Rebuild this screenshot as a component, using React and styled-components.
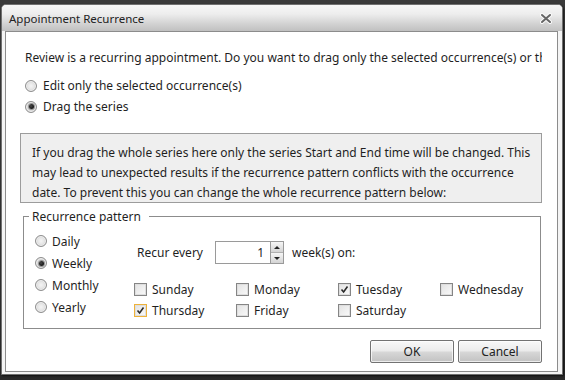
import styled, { createGlobalStyle } from "styled-components";

const GlobalStyle = createGlobalStyle`
  html, body {
    margin: 0;
    padding: 0;
  }
  body {
    width: 565px;
    height: 380px;
    overflow: hidden;
    background: #2c2c2c;
    font-family: "Noto Sans", "Open Sans", sans-serif;
    color: #1f1f1f;
  }
`;

const Backdrop = styled.div`
  width: 565px;
  height: 380px;
  box-sizing: border-box;
  padding: 4px 0 0 1px;
  background: linear-gradient(#3a3a3a, #2a2a2a);
`;

const Window = styled.div`
  width: 562px;
  height: 371px;
  box-sizing: border-box;
  border: 1px solid #707070;
  border-radius: 5px 5px 0 0;
  background: #f4f4f4;
  display: flex;
  flex-direction: column;
  box-shadow: 1px 1px 2px rgba(0, 0, 0, 0.6);
`;

const TitleBar = styled.div`
  height: 26px;
  flex-shrink: 0;
  display: flex;
  align-items: center;
  justify-content: space-between;
  padding: 0 10px 0 7px;
  border-radius: 4px 4px 0 0;
  background: linear-gradient(#f7f7f7 0%, #ededed 35%, #d4d4d4 70%, #c0c0c0 100%);
`;

const Title = styled.div`
  font-size: 11.5px;
  color: #222;
`;

const Content = styled.div`
  flex: 1;
  margin: 0 4px 2px 3px;
  border: 1px solid #8c8c8c;
  background: #fff;
  padding: 18px 15px 0 14px;
  overflow: hidden;
  font-size: 12px;
`;

const Prompt = styled.div`
  padding-left: 5px;
  line-height: 15px;
  white-space: nowrap;
  overflow: hidden;
`;

const Options = styled.div`
  margin-top: 10px;
  padding-left: 5px;
`;

const OptionRow = styled.div`
  height: ${(p) => p.$h || 21}px;
  display: flex;
  align-items: center;
  gap: ${(p) => p.$gap || 6}px;
  white-space: nowrap;
`;

const Radio = styled.span`
  position: relative;
  width: 12px;
  height: 12px;
  flex-shrink: 0;
  box-sizing: border-box;
  border-radius: 50%;
  border: 1px solid #8e8e8e;
  background: radial-gradient(circle at 50% 50%, #f4f4f4 0%, #e6e6e6 45%, #b9b9b9 100%);
  box-shadow: inset 0 0 0 1px #f0f0f0;

  &::after {
    content: "";
    position: absolute;
    left: 2.5px;
    top: 2.5px;
    width: 5px;
    height: 5px;
    border-radius: 50%;
    background: radial-gradient(circle at 40% 40%, #4a4a4a 0%, #0e0e0e 75%);
    box-shadow: 0 0 1px 1px #8a8a8a;
    display: ${(p) => (p.$checked ? "block" : "none")};
  }
`;

const InfoBox = styled.div`
  margin-top: 16px;
  height: 70px;
  box-sizing: border-box;
  border: 1px solid #9c9c9c;
  background: #efefef;
  padding: 9px 11px 0;
  line-height: 20px;
  white-space: nowrap;
`;

const Fieldset = styled.fieldset`
  margin: 6px 1px 0 3px;
  padding: 6px 0 7px 5px;
  border: 1px solid #8c8c8c;
  min-width: 0;
`;

const Legend = styled.legend`
  padding: 0 8px 0 3px;
  line-height: 15px;
`;

const PatternBody = styled.div`
  display: flex;
  padding-left: 6px;
`;

const Frequencies = styled.div`
  width: 99px;
  flex-shrink: 0;
`;

const WeeklyPanel = styled.div`
  display: flex;
  flex-direction: column;
`;

const RecurRow = styled.div`
  margin-top: 11px;
  padding-left: 3px;
  display: flex;
  align-items: center;
  height: 23px;
`;

const RecurLabel = styled.span`
  width: 78px;
`;

const Spinner = styled.div`
  display: flex;
  height: 23px;
`;

const SpinInput = styled.div`
  width: 55px;
  box-sizing: border-box;
  border: 1px solid #9a9a9a;
  border-right: none;
  text-align: right;
  padding-right: 6px;
  line-height: 21px;
  background: #fff;
`;

const SpinButtons = styled.div`
  width: 14px;
  box-sizing: border-box;
  border: 1px solid #9a9a9a;
  display: flex;
  flex-direction: column;
`;

const SpinButton = styled.div`
  flex: 1;
  display: flex;
  align-items: center;
  justify-content: center;
  background: linear-gradient(#f6f6f6, #d4d4d4);
  border-top: ${(p) => (p.$down ? "1px solid #b0b0b0" : "none")};

  &::before {
    content: "";
    border-left: 3px solid transparent;
    border-right: 3px solid transparent;
    ${(p) => (p.$down ? "border-top: 3px solid #222;" : "border-bottom: 3px solid #222;")}
  }
`;

const WeekSuffix = styled.span`
  margin-left: 8px;
`;

const DaysGrid = styled.div`
  margin-top: 15px;
  display: grid;
  grid-template-columns: repeat(4, 102px);
  grid-auto-rows: 21px;
`;

const Box = styled.span`
  width: 13px;
  height: 13px;
  flex-shrink: 0;
  box-sizing: border-box;
  border: 1px solid ${(p) => (p.$focused ? "#eeb23a" : "#858585")};
  background: linear-gradient(135deg, #e2e2e2, #fafafa);
  box-shadow: inset 0 0 0 1px #dedede;
  display: flex;
  align-items: center;
  justify-content: center;
`;

const ButtonRow = styled.div`
  margin-top: 11px;
  display: flex;
  justify-content: flex-end;
  gap: 4px;
`;

const Button = styled.button`
  width: 84px;
  height: 23px;
  padding: 0;
  border: 1px solid #727272;
  border-radius: 2px;
  font-family: inherit;
  font-size: 12px;
  color: #222;
  background: linear-gradient(#f8f8f8 0%, #ececec 45%, #d6d6d6 55%, #c2c2c2 100%);
  box-shadow: inset 0 0 0 1px rgba(255, 255, 255, 0.7);
`;

const CloseIcon = () => (
  <svg width="12" height="11" viewBox="0 0 12 11">
    <path d="M2 2 L10 9 M10 2 L2 9" stroke="#fafafa" strokeWidth="4" strokeLinecap="round" />
    <path d="M2 2 L10 9 M10 2 L2 9" stroke="#666" strokeWidth="2" strokeLinecap="round" />
  </svg>
);

const CheckMark = () => (
  <svg width="9" height="9" viewBox="0 0 9 9">
    <path d="M1.5 4.5 L3.6 7 L7.5 1.5" stroke="#2a2a2a" strokeWidth="1.6" fill="none" />
  </svg>
);

const RadioOption = ({ checked, label, h, gap }) => (
  <OptionRow $h={h} $gap={gap}>
    <Radio $checked={checked} />
    <span>{label}</span>
  </OptionRow>
);

const Day = ({ label, checked, focused }) => (
  <OptionRow $gap={5}>
    <Box $focused={focused}>{checked && <CheckMark />}</Box>
    <span>{label}</span>
  </OptionRow>
);

const days = [
  { label: "Sunday" },
  { label: "Monday" },
  { label: "Tuesday", checked: true },
  { label: "Wednesday" },
  { label: "Thursday", checked: true, focused: true },
  { label: "Friday" },
  { label: "Saturday" },
];

const App = () => (
  <>
    <GlobalStyle />
    <Backdrop>
      <Window>
        <TitleBar>
          <Title>Appointment Recurrence</Title>
          <CloseIcon />
        </TitleBar>
        <Content>
          <Prompt>
            Review is a recurring appointment. Do you want to drag only the selected occurrence(s) or the whole series?
          </Prompt>
          <Options>
            <RadioOption label="Edit only the selected occurrence(s)" />
            <RadioOption checked label="Drag the series" />
          </Options>
          <InfoBox>
            If you drag the whole series here only the series Start and End time will be changed. This
            <br />
            may lead to unexpected results if the recurrence pattern conflicts with the occurrence
            <br />
            date. To prevent this you can change the whole recurrence pattern below:
          </InfoBox>
          <Fieldset>
            <Legend>Recurrence pattern</Legend>
            <PatternBody>
              <Frequencies>
                <RadioOption label="Daily" h={22} gap={5} />
                <RadioOption checked label="Weekly" h={22} gap={5} />
                <RadioOption label="Monthly" h={22} gap={5} />
                <RadioOption label="Yearly" h={22} gap={5} />
              </Frequencies>
              <WeeklyPanel>
                <RecurRow>
                  <RecurLabel>Recur every</RecurLabel>
                  <Spinner>
                    <SpinInput>1</SpinInput>
                    <SpinButtons>
                      <SpinButton />
                      <SpinButton $down />
                    </SpinButtons>
                  </Spinner>
                  <WeekSuffix>week(s) on:</WeekSuffix>
                </RecurRow>
                <DaysGrid>
                  {days.map((d) => (
                    <Day key={d.label} {...d} />
                  ))}
                </DaysGrid>
              </WeeklyPanel>
            </PatternBody>
          </Fieldset>
          <ButtonRow>
            <Button>OK</Button>
            <Button>Cancel</Button>
          </ButtonRow>
        </Content>
      </Window>
    </Backdrop>
  </>
);

export default App;
